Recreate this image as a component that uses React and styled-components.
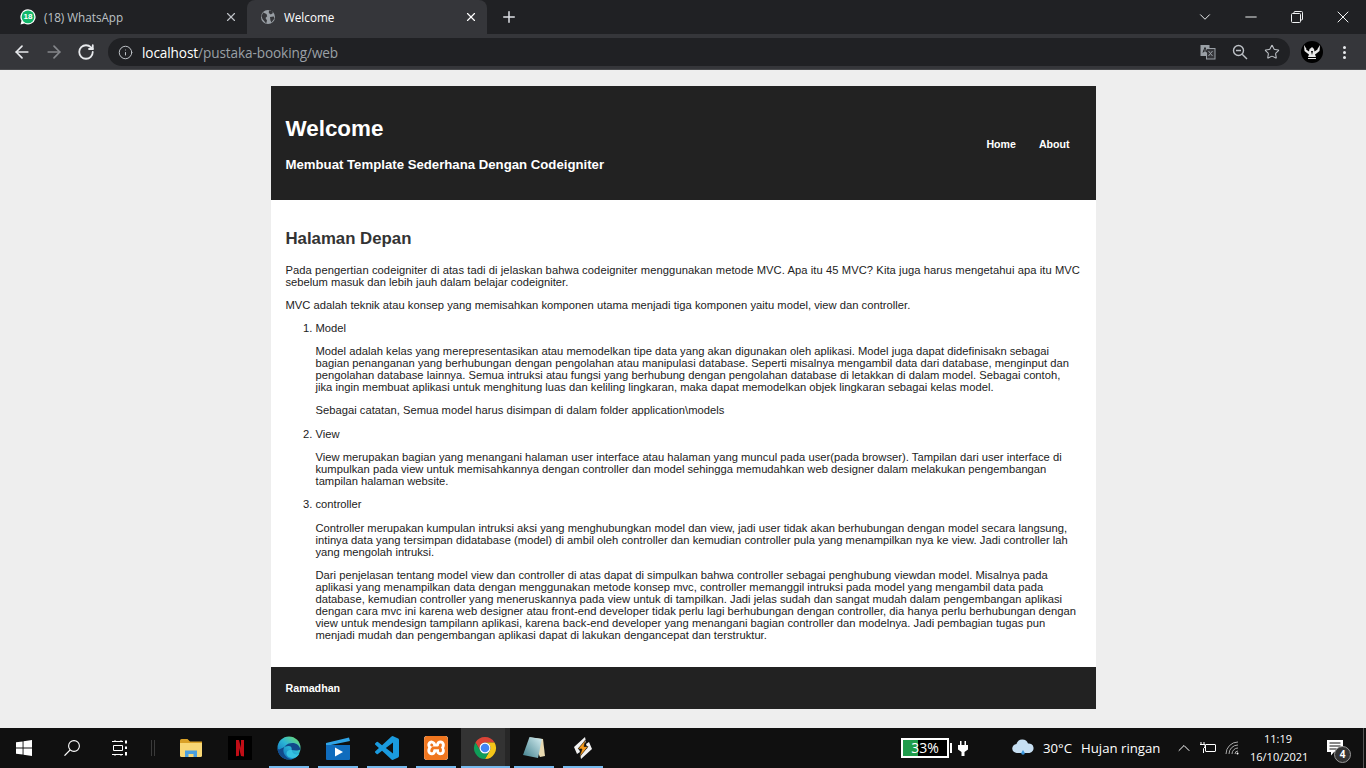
import React from 'react';
import styled, { createGlobalStyle } from 'styled-components';
import { ArrowLeft, ArrowRight, RotateCw, Info, Plus, X, ChevronDown, Minus, Star, ChevronUp } from 'lucide-react';
import { SiXampp } from 'react-icons/si';

const Global = createGlobalStyle`
  html, body { margin: 0; padding: 0; height: 768px; overflow: hidden; background: #eeeeee; }
  * { box-sizing: border-box; }
`;
const UI = `"Open Sans", "Noto Sans", sans-serif`;

const Screen = styled.div`
  width: 1366px; height: 768px; display: flex; flex-direction: column; overflow: hidden;
`;
const Browser = styled.header`
  flex: none; display: flex; flex-direction: column; font-family: ${UI};
`;
const TabStrip = styled.div`
  height: 34px; background: #202124; display: flex; align-items: stretch; padding-left: 7px;
`;
const Tab = styled.div`
  width: 240px; display: flex; align-items: center; gap: 8px; padding: 0 9px 0 13px;
  border-radius: 8px 8px 0 0; font-size: 11.7px;
  background: ${p => (p.$active ? '#35363a' : 'transparent')};
  color: ${p => (p.$active ? '#ffffff' : '#bdc1c6')};
`;
const TabTitle = styled.span`flex: 1; white-space: nowrap;`;
const NewTab = styled.div`
  width: 44px; display: flex; align-items: center; justify-content: center; color: #dee1e6;
`;
const WinControls = styled.div`
  margin-left: auto; display: flex; align-items: center; color: #f1f3f4;
`;
const WinButton = styled.div`
  width: 46px; height: 30px; display: flex; align-items: center; justify-content: center;
`;
const Fav = styled.div`
  position: relative; width: 16px; height: 16px; flex: none; margin-top: -1px;
`;
const FavBadge = styled.span`
  position: absolute; inset: 0; display: flex; align-items: center; justify-content: center;
  font: bold 8px "Liberation Sans", sans-serif; color: #fff;
`;
const Toolbar = styled.div`
  height: 36px; background: #35363a; display: flex; align-items: center;
  border-bottom: 1px solid #4a4b4e;
`;
const NavIcons = styled.div`
  width: 108px; display: flex; align-items: center; padding-left: 6px; flex: none;
`;
const NavIcon = styled.div`
  width: 32px; display: flex; justify-content: center; color: ${p => (p.$off ? '#85878b' : '#e8eaed')};
`;
const Omnibox = styled.div`
  width: 1182px; height: 28px; border-radius: 14px; background: #202124; display: flex; align-items: center;
  padding: 0 10px; color: #bdc1c6; flex: none; margin-top: 1px;
`;
const Url = styled.span`
  margin-left: 9px; font-size: 13.6px; color: #9aa0a6; white-space: nowrap; letter-spacing: -0.1px;
`;
const Host = styled.span`color: #ffffff;`;
const OmniRight = styled.div`
  margin-left: auto; display: flex; align-items: center; gap: 16px; color: #bdc1c6;
`;
const Avatar = styled.div`
  margin-left: 11px; width: 22px; height: 22px; border-radius: 50%; background: #000; flex: none;
  display: flex; align-items: center; justify-content: center; margin-top: 1px;
`;
const Kebab = styled.div`
  margin-left: 20px; display: flex; flex-direction: column; gap: 2px; margin-top: 1px;
`;
const Dot = styled.i`
  width: 3px; height: 3px; border-radius: 50%; background: #e8eaed; display: block;
`;

const Viewport = styled.main`
  flex: 1; min-height: 0; background: #eeeeee; padding-top: 16px; overflow: hidden;
  font: 11.2px/12px "Liberation Sans", Arial, sans-serif; color: #222222;
`;
const Wrapper = styled.div`
  width: 825px; margin: 0 auto; background: #ffffff;
`;
const SiteHeader = styled.div`
  height: 114px; background: #222222; color: #fff; display: flex; align-items: center;
  justify-content: space-between; padding: 2px 15px 0;
`;
const SiteTitle = styled.h1`
  margin: 0; font-size: 22.4px; line-height: 26px; font-weight: bold;
`;
const SiteSub = styled.h2`
  margin: 15px 0 0; font-size: 13.2px; line-height: 15px; font-weight: bold;
`;
const Nav = styled.nav`
  display: flex; gap: 23px; padding-right: 11px; font-weight: bold; font-size: 10.6px;
`;
const Content = styled.section`
  padding: 29px 15px 26px;
`;
const Heading = styled.h2`
  margin: 0 0 16px; font-size: 16.8px; line-height: 19px; font-weight: bold; color: #333333;
`;
const Para = styled.p`
  margin: 0 0 11px; white-space: nowrap; letter-spacing: 0.02px;
  &:last-child { margin-bottom: 0; }
`;
const Line = styled.span`
  display: block; letter-spacing: ${p => (p.$wide ? '0.073px' : 'inherit')};
`;
const List = styled.ol`
  margin: 0; padding-left: 30px;
`;
const Item = styled.li`
  margin-bottom: 11.5px;
  &:last-child { margin-bottom: 0; }
`;
const ItemLabel = styled.div`margin-bottom: 11.2px;`;
const Footer = styled.footer`
  height: 42px; background: #222222; color: #fff; display: flex; align-items: center; padding: 0 15px;
  font-weight: bold; font-size: 10.7px;
`;

const Taskbar = styled.footer`
  flex: none; height: 40px; background: #101010; display: flex; align-items: stretch; color: #fff;
  font-family: ${UI};
`;
const SysButton = styled.div`
  width: 48px; display: flex; align-items: center; justify-content: center;
`;
const Divider = styled.div`
  width: 4px; margin: 12px 12px 12px 6.5px; border-left: 1px solid #3a3a3a; border-right: 1px solid #3a3a3a;
`;
const AppSlot = styled.div`
  position: relative; width: 49px; display: flex; align-items: center; justify-content: center;
  background: ${p => (p.$active ? 'linear-gradient(to right, #333333 44px, #272727 44px)' : 'transparent')};
  &::after {
    content: ''; position: absolute; bottom: 0; height: 2px; background: #76b9ed;
    left: ${p => (p.$active ? '0' : '4.5px')}; right: ${p => (p.$active ? '0' : '4.5px')};
    display: ${p => (p.$running ? 'block' : 'none')};
  }
`;
const Tray = styled.div`
  margin-left: auto; display: flex; align-items: center; height: 100%;
`;
const Battery = styled.div`
  position: relative; width: 48px; height: 20px; border: 2px solid #fff; background: #000;
  margin-right: 1px; font-size: 14px; line-height: 16px; text-align: center; color: #fff;
`;
const BatteryFill = styled.div`
  position: absolute; left: 0; top: 0; bottom: 0; background: #1f9c4b;
`;
const BatteryLabel = styled.span`position: relative;`;
const BatteryTip = styled.div`width: 2px; height: 10px; background: #fff; margin-right: 6px;`;
const Weather = styled.div`
  margin-left: 44px; display: flex; align-items: center; gap: 9px; font-size: 13.2px; white-space: nowrap; width: 160px;
`;
const TrayIcon = styled.div`
  width: 24px; display: flex; justify-content: center; color: #fff;
`;
const Clock = styled.div`
  width: 56px; margin-left: 6px; text-align: center; font-size: 11px; line-height: 18px; white-space: nowrap;
`;
const Notify = styled.div`
  position: relative; width: 34px; margin-left: 12px; display: flex; justify-content: center;
`;
const NotifyBadge = styled.span`
  position: absolute; right: 1px; bottom: -7px; width: 17px; height: 17px; border-radius: 50%;
  background: #333; border: 1px solid #999; font-size: 10px; font-weight: bold; line-height: 15px; text-align: center;
`;
const DesktopEdge = styled.div`
  width: 3px; height: 100%; margin-left: 11px; border-left: 1px solid #555;
`;

const WhatsIcon = () => (
  <Fav>
    <svg width="16" height="16" viewBox="0 0 16 16">
      <path d="M8 .3a7.6 7.6 0 0 0-6.500 11.500L.5 15.600l3.900-1A7.600 7.600 0 1 0 8 .3z" fill="#fff" />
      <circle cx="8" cy="7.900" r="6.400" fill="#12b76a" />
    </svg>
    <FavBadge>18</FavBadge>
  </Fav>
);
const GlobeIcon = () => (
  <Fav>
    <svg width="16" height="16" viewBox="0 0 16 16">
      <circle cx="8" cy="8" r="7" fill="#9aa0a6" />
      <path d="M3.200 3.600 6.500 5l.7 2.200L5.500 9 7 11.500l-.8 3L2.500 10 1.500 7zM9 1.500l3 .6 1 2-2.200 1.400L8.800 4zM10 8l3.800-.6.6 2.200-3 4-1-2.400z" fill="#35363a" />
    </svg>
  </Fav>
);
const RestoreIcon = () => (
  <svg width="12" height="12" viewBox="0 0 12 12" fill="none" stroke="#f1f3f4" strokeWidth="1">
    <rect x="0.500" y="2.500" width="9" height="9" rx="1" />
    <path d="M3 2.500V1.500a1 1 0 0 1 1-1h6.500a1 1 0 0 1 1 1V8a1 1 0 0 1-1 1H9.500" />
  </svg>
);
const TranslateIcon = () => (
  <svg width="16" height="16" viewBox="0 0 16 16">
    <rect x="0.500" y="1" width="9" height="11" fill="#9aa0a6" />
    <rect x="6.500" y="4.500" width="8.500" height="10.500" fill="#35363a" stroke="#9aa0a6" />
    <path d="M3 8.500 5 3.500l2 5M3.700 7h2.600" stroke="#202124" strokeWidth="1" fill="none" />
    <path d="M8.500 7l4 5M12.500 7l-4 5" stroke="#9aa0a6" strokeWidth="1" fill="none" />
  </svg>
);
const ZoomOutIcon = () => (
  <svg width="16" height="16" viewBox="0 0 16 16" fill="none" stroke="#bdc1c6" strokeWidth="1.400">
    <circle cx="6.500" cy="6.500" r="5" />
    <path d="M10.200 10.200 15 15M4 6.500h5" />
  </svg>
);
const EagleIcon = () => (
  <svg width="18" height="18" viewBox="0 0 18 18">
    <path d="M1 2l2.500 4L3 6.500l3 2 .5-2.500L8 5l1-1 1 1 1 1 .5 2.500 3-2L14.500 6 17 2l-.5 6-2.500 2-2 1.500 1 2.500H5l1-2.500L4 10 1.500 8z" fill="#e8e8e8" />
    <path d="M5 15.500h8" stroke="#e8e8e8" />
    <path d="M8 8l1 4 1-4z" fill="#000" />
  </svg>
);
const WindowsIcon = () => (
  <svg width="16" height="16" viewBox="0 0 16 16" fill="#fff">
    <path d="M0 2.300 6.600 1.400v6.200H0zM7.500 1.200 16 0v7.600H7.500zM0 8.400h6.600v6.200L0 13.700zM7.500 8.400H16V16l-8.500-1.200z" />
  </svg>
);
const SearchIcon = () => (
  <svg width="16" height="16" viewBox="0 0 16 16" fill="none" stroke="#fff" strokeWidth="1.100">
    <circle cx="10" cy="6" r="5.400" />
    <path d="M6.200 9.900.5 15.600" strokeWidth="1.300" />
  </svg>
);
const TaskViewIcon = () => (
  <svg width="16" height="16" viewBox="0 0 16 16" fill="none" stroke="#fff" strokeWidth="1">
    <path d="M0 1.500h11M0 14.500h11M1.500 5.500h9v5h-9z" />
    <path d="M3 0v2M9 0v2M3 14v2M9 14v2" strokeWidth="0.800" />
    <path d="M14 0.500v3M14 6.500v2.500M14 12v3.500" strokeWidth="2" />
  </svg>
);
const FolderIcon = () => (
  <svg width="22" height="18" viewBox="0 0 22 18">
    <path d="M0 1.500A1.500 1.500 0 0 1 1.500 0h6L10 2.500h12V5H0z" fill="#d9a128" />
    <path d="M0 4h22v12.500a1.500 1.500 0 0 1-1.500 1.500h-19A1.500 1.500 0 0 1 0 16.500z" fill="#f8d775" />
    <path d="M5 18v-6.500h12V18h-3.500v-3h-5v3z" fill="#4a9fe0" />
  </svg>
);
const NetflixIcon = () => (
  <svg width="24" height="24" viewBox="0 0 24 24">
    <rect width="24" height="24" fill="#000" />
    <path d="M8 4h3l2 8V4h3v16.500l-3-.5-2-8v7.800l-3 .4z" fill="#c00d16" />
  </svg>
);
const EdgeIcon = () => (
  <svg width="24" height="24" viewBox="0 0 24 24">
    <defs>
      <linearGradient id="eg" x1="0.1" y1="1" x2="0.9" y2="0">
        <stop offset="0" stopColor="#0b63b8" />
        <stop offset="0.55" stopColor="#2bb5d6" />
        <stop offset="1" stopColor="#6fdc6f" />
      </linearGradient>
    </defs>
    <circle cx="12" cy="12" r="11.500" fill="url(#eg)" />
    <path d="M23.400 13.500c-.5-3.800-4-6.500-8-6.500-5 0-9 3.300-9 7.600 0 4 3.300 8 8.300 8.800C7.500 24.500.5 20 .5 12 2 16 6 10 11.500 10c3 0 3.500 2 3 4 2.500.5 6.500 1 8.900-.5z" fill="#114a8b" />
    <path d="M14.700 13.800c-2.800 0-5.200 1.500-5.200 3.700 0 2.500 2.700 4.400 6 4.400 2.700 0 5.500-1.500 7-4.500-2.500 1.800-7.300 1.500-7.800-3.600z" fill="#35c1e1" />
  </svg>
);
const FilmIcon = () => (
  <svg width="24" height="24" viewBox="0 0 24 24">
    <path d="M0 7 23 1.500l1 3.500L0 10z" fill="#2fa4e7" />
    <path d="M0 9h24v14a1 1 0 0 1-1 1H1a1 1 0 0 1-1-1z" fill="#0f6cbd" />
    <path d="M9 11.500v9l8-4.500z" fill="#fff" />
  </svg>
);
const VSCodeIcon = () => (
  <svg width="24" height="24" viewBox="0 0 24 24">
    <path d="M23.150 2.587 18.210.21a1.494 1.494 0 0 0-1.705.29l-9.460 8.630-4.120-3.128a.999.999 0 0 0-1.276.057L.327 7.261A1 1 0 0 0 .326 8.740L3.899 12 .326 15.260a1 1 0 0 0 .001 1.479L1.650 17.940a.999.999 0 0 0 1.276.057l4.120-3.128 9.460 8.630a1.492 1.492 0 0 0 1.704.29l4.942-2.377A1.500 1.500 0 0 0 24 20.060V3.939a1.500 1.500 0 0 0-.85-1.352zm-5.146 14.861L10.826 12l7.178-5.448v10.896z" fill="#1a9bdf" />
  </svg>
);
const XamppBox = styled.div`
  position: relative; width: 24px; height: 24px; border-radius: 3px; background: #fff;
  display: flex; align-items: center; justify-content: center; overflow: hidden;
`;
const ChromeIcon = () => (
  <svg width="24" height="24" viewBox="0 0 24 24">
    <path d="M21.530 6.500H12A5.500 5.500 0 0 0 7.240 14.750L2.470 6.500A11 11 0 0 1 21.530 6.500z" fill="#db4437" />
    <path d="M12 23 16.760 14.750A5.500 5.500 0 0 0 12 6.500h9.530A11 11 0 0 1 12 23z" fill="#f5c518" />
    <path d="M2.470 6.500 7.240 14.750a5.500 5.500 0 0 0 9.520 0L12 23A11 11 0 0 1 2.470 6.500z" fill="#0f9d58" />
    <circle cx="12" cy="12" r="5.500" fill="#fff" />
    <circle cx="12" cy="12" r="4.300" fill="#4285f4" />
  </svg>
);
const NotepadIcon = () => (
  <svg width="24" height="24" viewBox="0 0 24 24">
    <defs>
      <linearGradient id="np" x1="0" y1="1" x2="1" y2="0">
        <stop offset="0" stopColor="#3f7f8c" />
        <stop offset="1" stopColor="#d8f0f3" />
      </linearGradient>
    </defs>
    <path d="M8 1.500 21 3l2 17-5 1z" fill="#e8d9b0" />
    <path d="M7.500 1 20 3 16 22 1 19z" fill="url(#np)" />
  </svg>
);
const WinampIcon = () => (
  <svg width="24" height="24" viewBox="0 0 24 24">
    <path d="M14 1 3 11l3 7 3-2-1.500-4L15 6z" fill="#f2f2f2" />
    <path d="M10 23 21 13l-3-7-3 2 1.500 4L9 18z" fill="#f2f2f2" />
    <path d="M14.500 4 7 13h4l-2.500 8L17 10.500h-4z" fill="#f59a1b" stroke="#111" strokeWidth="0.600" />
  </svg>
);
const PlugIcon = () => (
  <svg width="10" height="15" viewBox="0 0 10 15" fill="#fff">
    <path d="M2 0h1.500v4H6.500V0H8v4h2v4.500L6.500 11v4h-3v-4L0 8.500V4h2z" />
  </svg>
);
const CloudIcon = () => (
  <svg width="22" height="18" viewBox="0 0 22 18">
    <path d="M5 14a4.500 4.500 0 0 1-.5-9A6 6 0 0 1 16 4.500 4.800 4.800 0 0 1 17.500 14z" fill="#c7dff2" />
    <path d="M11 11l-1.800 3a1.800 1.800 0 1 0 3.600 0z" fill="#3a96dd" />
  </svg>
);
const PowerTrayIcon = () => (
  <svg width="18" height="12" viewBox="0 0 18 12" fill="none" stroke="#fff" strokeWidth="1">
    <rect x="6.500" y="2.500" width="10" height="7" rx="0.500" />
    <path d="M2 0v2.500M5 0v2.500M1 2.500h5v2.500l-1.500 1.500V11" />
  </svg>
);
const WifiIcon = () => (
  <svg width="14" height="14" viewBox="0 0 14 14" fill="none" stroke="#bbb" strokeWidth="0.900">
    <path d="M1 13A12 12 0 0 1 13 1M4 13a9 9 0 0 1 9-9M7 13a6 6 0 0 1 6-6M10 13a3 3 0 0 1 3-3" />
    <circle cx="12.500" cy="12.500" r="1" fill="#fff" stroke="none" />
  </svg>
);
const BubbleIcon = () => (
  <svg width="16" height="16" viewBox="0 0 16 16">
    <path d="M0 0h16v12H7l-3 3.500V12H0z" fill="#fff" />
    <path d="M2.500 3h11M2.500 6h11M2.500 9h7" stroke="#101010" strokeWidth="1" />
  </svg>
);

const intro = [
  'Pada pengertian codeigniter di atas tadi di jelaskan bahwa codeigniter menggunakan metode MVC. Apa itu 45 MVC? Kita juga harus mengetahui apa itu MVC',
  'sebelum masuk dan lebih jauh dalam belajar codeigniter.',
];
const intro2 = ['MVC adalah teknik atau konsep yang memisahkan komponen utama menjadi tiga komponen yaitu model, view dan controller.'];
const items = [
  {
    label: 'Model',
    paras: [
      [
        'Model adalah kelas yang merepresentasikan atau memodelkan tipe data yang akan digunakan oleh aplikasi. Model juga dapat didefinisakn sebagai',
        'bagian penanganan yang berhubungan dengan pengolahan atau manipulasi database. Seperti misalnya mengambil data dari database, menginput dan',
        'pengolahan database lainnya. Semua intruksi atau fungsi yang berhubung dengan pengolahan database di letakkan di dalam model. Sebagai contoh,',
        'jika ingin membuat aplikasi untuk menghitung luas dan keliling lingkaran, maka dapat memodelkan objek lingkaran sebagai kelas model.',
      ],
      ['Sebagai catatan, Semua model harus disimpan di dalam folder application\\models'],
    ],
  },
  {
    label: 'View',
    paras: [
      [
        'View merupakan bagian yang menangani halaman user interface atau halaman yang muncul pada user(pada browser). Tampilan dari user interface di',
        'kumpulkan pada view untuk memisahkannya dengan controller dan model sehingga memudahkan web designer dalam melakukan pengembangan',
        'tampilan halaman website.',
      ],
    ],
  },
  {
    label: 'controller',
    paras: [
      [
        'Controller merupakan kumpulan intruksi aksi yang menghubungkan model dan view, jadi user tidak akan berhubungan dengan model secara langsung,',
        'intinya data yang tersimpan didatabase (model) di ambil oleh controller dan kemudian controller pula yang menampilkan nya ke view. Jadi controller lah',
        'yang mengolah intruksi.',
      ],
      [
        'Dari penjelasan tentang model view dan controller di atas dapat di simpulkan bahwa controller sebagai penghubung viewdan model. Misalnya pada',
        'aplikasi yang menampilkan data dengan menggunakan metode konsep mvc, controller memanggil intruksi pada model yang mengambil data pada',
        'database, kemudian controller yang meneruskannya pada view untuk di tampilkan. Jadi jelas sudah dan sangat mudah dalam pengembangan aplikasi',
        'dengan cara mvc ini karena web designer atau front-end developer tidak perlu lagi berhubungan dengan controller, dia hanya perlu berhubungan dengan',
        'view untuk mendesign tampilann aplikasi, karena back-end developer yang menangani bagian controller dan modelnya. Jadi pembagian tugas pun',
        'menjadi mudah dan pengembangan aplikasi dapat di lakukan dengancepat dan terstruktur.',
      ],
    ],
  },
];
const Lines = ({ lines, wideFirst }) => (
  <Para>{lines.map((l, i) => <Line key={l} $wide={wideFirst && i === 0}>{l}</Line>)}</Para>
);

export default function App() {
  return (
    <Screen>
      <Global />
      <Browser>
        <TabStrip>
          <Tab>
            <WhatsIcon />
            <TabTitle>(18) WhatsApp</TabTitle>
            <X size={14} strokeWidth={2} />
          </Tab>
          <Tab $active>
            <GlobeIcon />
            <TabTitle>Welcome</TabTitle>
            <X size={14} strokeWidth={2} />
          </Tab>
          <NewTab><Plus size={18} strokeWidth={2} /></NewTab>
          <WinControls>
            <WinButton><ChevronDown size={18} strokeWidth={1.300} /></WinButton>
            <WinButton><Minus size={18} strokeWidth={1.300} /></WinButton>
            <WinButton><RestoreIcon /></WinButton>
            <WinButton><X size={20} strokeWidth={1.200} /></WinButton>
          </WinControls>
        </TabStrip>
        <Toolbar>
          <NavIcons>
            <NavIcon><ArrowLeft size={20} strokeWidth={2} /></NavIcon>
            <NavIcon $off><ArrowRight size={20} strokeWidth={2} /></NavIcon>
            <NavIcon><RotateCw size={18} strokeWidth={2.400} /></NavIcon>
          </NavIcons>
          <Omnibox>
            <Info size={15} strokeWidth={1.600} />
            <Url><Host>localhost</Host>/pustaka-booking/web</Url>
            <OmniRight>
              <TranslateIcon />
              <ZoomOutIcon />
              <Star size={16} strokeWidth={1.600} />
            </OmniRight>
          </Omnibox>
          <Avatar><EagleIcon /></Avatar>
          <Kebab><Dot /><Dot /><Dot /></Kebab>
        </Toolbar>
      </Browser>
      <Viewport>
        <Wrapper>
          <SiteHeader>
            <div>
              <SiteTitle>Welcome</SiteTitle>
              <SiteSub>Membuat Template Sederhana Dengan Codeigniter</SiteSub>
            </div>
            <Nav><span>Home</span><span>About</span></Nav>
          </SiteHeader>
          <Content>
            <Heading>Halaman Depan</Heading>
            <Lines lines={intro} wideFirst />
            <Lines lines={intro2} />
            <List>
              {items.map(it => (
                <Item key={it.label}>
                  <ItemLabel>{it.label}</ItemLabel>
                  {it.paras.map(p => <Lines key={p[0]} lines={p} />)}
                </Item>
              ))}
            </List>
          </Content>
          <Footer>Ramadhan</Footer>
        </Wrapper>
      </Viewport>
      <Taskbar>
        <SysButton><WindowsIcon /></SysButton>
        <SysButton><SearchIcon /></SysButton>
        <SysButton><TaskViewIcon /></SysButton>
        <Divider />
        <AppSlot><FolderIcon /></AppSlot>
        <AppSlot><NetflixIcon /></AppSlot>
        <AppSlot $running><EdgeIcon /></AppSlot>
        <AppSlot $running><FilmIcon /></AppSlot>
        <AppSlot $running><VSCodeIcon /></AppSlot>
        <AppSlot $running><XamppBox><SiXampp size={24} color="#f0761f" /></XamppBox></AppSlot>
        <AppSlot $running $active><ChromeIcon /></AppSlot>
        <AppSlot $running><NotepadIcon /></AppSlot>
        <AppSlot $running><WinampIcon /></AppSlot>
        <Tray>
          <Battery>
            <BatteryFill style={{ width: '33%' }} />
            <BatteryLabel>33%</BatteryLabel>
          </Battery>
          <BatteryTip />
          <PlugIcon />
          <Weather>
            <CloudIcon />
            <span>30°C</span>
            <span>Hujan ringan</span>
          </Weather>
          <TrayIcon><ChevronUp size={20} strokeWidth={1.200} /></TrayIcon>
          <TrayIcon><PowerTrayIcon /></TrayIcon>
          <TrayIcon><WifiIcon /></TrayIcon>
          <Clock>11:19<br />16/10/2021</Clock>
          <Notify><BubbleIcon /><NotifyBadge>4</NotifyBadge></Notify>
          <DesktopEdge />
        </Tray>
      </Taskbar>
    </Screen>
  );
}
